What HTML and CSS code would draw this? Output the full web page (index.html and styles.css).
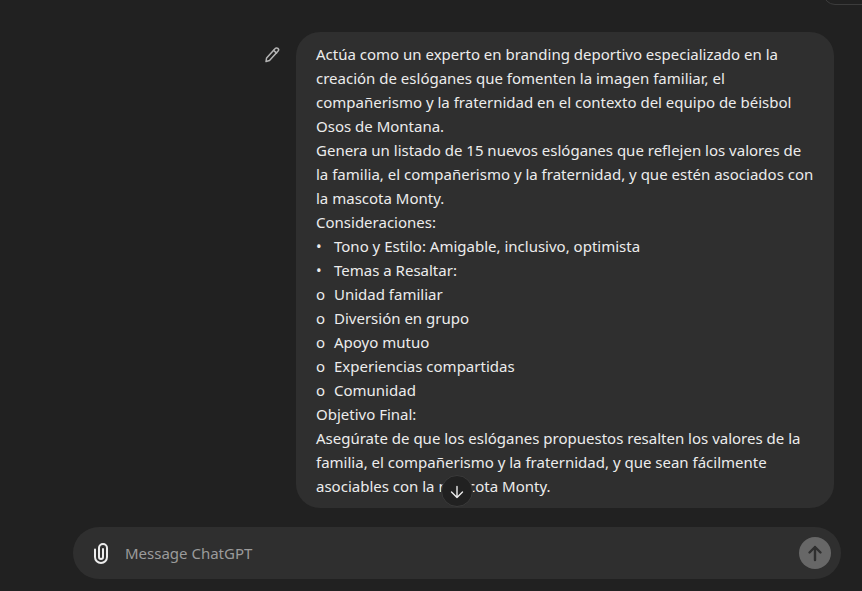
FILE: index.html
```html
<!DOCTYPE html>
<html lang="en">
<head>
    <meta charset="UTF-8">
    <meta name="viewport" content="width=device-width, initial-scale=1.0">
    <title>ChatGPT</title>
    <link rel="stylesheet" href="styles.css">
</head>
<body>
    <div class="corner"></div>
    <main class="thread">
        <div class="turn">
            <button class="edit" aria-label="Edit message">
                <svg width="18" height="18" viewBox="0 0 18 18" fill="none" stroke="currentColor" stroke-width="1.5" stroke-linejoin="round" stroke-linecap="round">
                    <path d="M12.2 2.6a1.9 1.9 0 0 1 2.9 2.5l-8.6 9.4-3.5 1 .6-3.6z"/>
                    <path d="M10.6 4.4l3 2.7"/>
                </svg>
            </button>
            <div class="bubble">
                <p>Actúa como un experto en branding deportivo especializado en la</p>
                <p>creación de eslóganes que fomenten la imagen familiar, el</p>
                <p>compañerismo y la fraternidad en el contexto del equipo de béisbol</p>
                <p>Osos de Montana.</p>
                <p>Genera un listado de 15 nuevos eslóganes que reflejen los valores de</p>
                <p>la familia, el compañerismo y la fraternidad, y que estén asociados con</p>
                <p>la mascota Monty.</p>
                <p>Consideraciones:</p>
                <p><span class="mark">•</span>Tono y Estilo: Amigable, inclusivo, optimista</p>
                <p><span class="mark">•</span>Temas a Resaltar:</p>
                <p><span class="mark">o</span>Unidad familiar</p>
                <p><span class="mark">o</span>Diversión en grupo</p>
                <p><span class="mark">o</span>Apoyo mutuo</p>
                <p><span class="mark">o</span>Experiencias compartidas</p>
                <p><span class="mark">o</span>Comunidad</p>
                <p>Objetivo Final:</p>
                <p>Asegúrate de que los eslóganes propuestos resalten los valores de la</p>
                <p>familia, el compañerismo y la fraternidad, y que sean fácilmente</p>
                <p>asociables con la mascota Monty.</p>
            </div>
        </div>
    </main>
    <button class="scroll-down" aria-label="Scroll down">
        <svg width="16" height="16" viewBox="0 0 16 16" fill="none" stroke="currentColor" stroke-width="1.4" stroke-linecap="round" stroke-linejoin="round">
            <path d="M8 3.500v11M2.500 9L8 14.500 13.500 9"/>
        </svg>
    </button>
    <form class="composer">
        <svg class="clip" width="24" height="24" viewBox="0 0 24 24" fill="none" stroke="currentColor" stroke-width="2" stroke-linecap="round">
            <path d="M6 8.500V16a6 6 0 0 0 12 0V7a4 4 0 0 0-8 0v9a2 2 0 0 0 4 0V8"/>
        </svg>
        <span class="placeholder">Message ChatGPT</span>
        <button class="send" type="button" aria-label="Send">
            <svg width="20" height="20" viewBox="0 0 20 20" fill="none" stroke="currentColor" stroke-width="2.400" stroke-linecap="round" stroke-linejoin="round">
                <path d="M10 17V4M4.500 9.500L10 4l5.500 5.500"/>
            </svg>
        </button>
    </form>
</body>
</html>
```

FILE: styles.css
```css
body {
    margin: 0;
    height: 591px;
    overflow: hidden;
    position: relative;
    background-color: #212121;
    color: #ececec;
    font-family: "Noto Sans", sans-serif;
    font-size: 15px;
    display: flex;
    flex-direction: column;
}
.corner {
    position: absolute;
    top: -30px;
    right: -30px;
    width: 67px;
    height: 33px;
    border: 1px solid #3c3c3c;
    border-radius: 12px;
}
.thread {
    padding: 32px 28px 0 0;
}
.turn {
    display: flex;
    justify-content: flex-end;
    align-items: flex-start;
    gap: 15px;
}
.edit {
    background: none;
    border: none;
    padding: 0;
    margin-top: 14px;
    width: 18px;
    height: 18px;
    color: #b4b4b4;
}
.bubble {
    background: #2f2f2f;
    border-radius: 24px;
    width: 538px;
    box-sizing: border-box;
    padding: 10px 20px;
}
.bubble p {
    margin: 0;
    line-height: 24px;
    white-space: nowrap;
}
.mark {
    display: inline-block;
    width: 18px;
}
.scroll-down {
    position: absolute;
    left: 441px;
    top: 475px;
    width: 32px;
    height: 32px;
    box-sizing: border-box;
    border-radius: 50%;
    border: 1px solid #3a3a3a;
    background: #212121;
    color: #ececec;
    padding: 0;
    display: flex;
    align-items: center;
    justify-content: center;
}
.composer {
    margin: 19px 21px 0 73px;
    height: 52px;
    border-radius: 26px;
    background: #2f2f2f;
    display: flex;
    align-items: center;
    padding: 0 10px 0 16px;
}
.clip {
    color: #ececec;
}
.placeholder {
    margin-left: 12px;
    flex: 1;
    color: #9b9b9b;
}
.send {
    width: 32px;
    height: 32px;
    border-radius: 50%;
    border: none;
    padding: 0;
    background: #676767;
    color: #2f2f2f;
    display: flex;
    align-items: center;
    justify-content: center;
}
```
